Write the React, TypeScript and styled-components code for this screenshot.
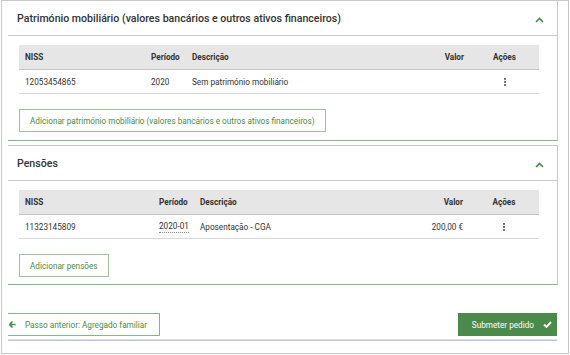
import React from "react";
import styled, { createGlobalStyle } from "styled-components";

const GlobalStyle = createGlobalStyle`
  html, body { margin: 0; padding: 0; background: #fff; }
  body { font-family: Roboto, "Liberation Sans", Arial, sans-serif; color: #333; }
  * { box-sizing: border-box; }
`;

const GREEN = "#4b8a4b";

const Frame = styled.div`
  width: 568px;
  height: 354px;
  margin-left: 1px;
  border: 1px solid #c8c8c8;
  overflow: hidden;
`;

const Content = styled.div`
  padding: 0 10px 0 6px;
`;

const Panel = styled.section<{ $first?: boolean }>`
  border-right: 1px solid #c8c8c8;
  border-top: ${(p) => (p.$first ? "none" : "1px solid #c8c8c8")};
  border-bottom: 1px solid #86b686;
  margin-bottom: 4px;
`;

const PanelHeader = styled.div`
  height: 35px;
  border-bottom: 1px solid #c8c8c8;
  display: flex;
  align-items: center;
  justify-content: space-between;
  padding: 0 13px 0 9px;
`;

const Title = styled.h2`
  margin: 0;
  font-size: 10.6px;
  font-weight: 500;
  color: #333;
`;

const ChevronWrap = styled.span`
  display: flex;
  margin-top: 4px;
`;

const PanelBody = styled.div<{ $top: number; $bottom: number }>`
  padding: ${(p) => p.$top}px 18px ${(p) => p.$bottom}px 11px;
`;

const Table = styled.div<{ $cols: string }>`
  display: grid;
  grid-template-columns: ${(p) => p.$cols};
  font-size: 8.2px;
  color: #333;
  white-space: nowrap;
`;

const HeadCell = styled.div<{ $align?: string }>`
  background: #e6e6e6;
  height: 25px;
  border-bottom: 1px solid #c4c4c4;
  display: flex;
  align-items: center;
  justify-content: ${(p) => p.$align || "flex-start"};
  padding: 0 6px;
  font-weight: 700;
`;

const Cell = styled.div<{ $align?: string }>`
  height: 24px;
  border-bottom: 1px solid #d8d8d8;
  display: flex;
  align-items: center;
  justify-content: ${(p) => p.$align || "flex-start"};
  padding: 0 6px;
`;

const Dotted = styled.span`
  border-bottom: 1px dotted #888;
  line-height: 11px;
`;

const OutlineButton = styled.button`
  margin-top: 15px;
  height: 23px;
  padding: 0 10px;
  background: #fff;
  border: 1px solid #9cc39c;
  color: ${GREEN};
  font-family: Roboto, "Liberation Sans", Arial, sans-serif;
  font-size: 8.2px;
  cursor: pointer;
`;

const Footer = styled.div`
  margin-top: 28px;
  display: flex;
  justify-content: space-between;
  align-items: center;
  padding-right: 1px;
`;

const PrevButton = styled.button`
  height: 23px;
  width: 152px;
  display: flex;
  align-items: center;
  gap: 9px;
  padding: 0 0 0 1px;
  background: #fff;
  border: 1px solid #86b686;
  border-left: none;
  color: ${GREEN};
  font-family: Roboto, "Liberation Sans", Arial, sans-serif;
  font-size: 8.2px;
`;

const SubmitButton = styled.button`
  height: 23px;
  width: 99px;
  display: flex;
  align-items: center;
  justify-content: flex-end;
  gap: 9px;
  padding: 0 5px 0 0;
  background: ${GREEN};
  border: none;
  color: #fff;
  font-family: Roboto, "Liberation Sans", Arial, sans-serif;
  font-size: 8.2px;
`;

const BottomLine = styled.div`
  margin-top: 3px;
  margin-right: 1px;
  height: 2px;
  border-top: 1px solid #dedede;
  border-bottom: 1px solid #b9c6e2;
`;

const Chevron = () => (
  <ChevronWrap>
    <svg width="9" height="6" viewBox="0 0 9 6">
      <polyline points="1,5 4.5,1.5 8,5" fill="none" stroke={GREEN} strokeWidth="1.6" />
    </svg>
  </ChevronWrap>
);

const Kebab = () => (
  <svg width="2" height="8" viewBox="0 0 2 8">
    <rect x="0" y="0" width="2" height="1.8" fill="#666" />
    <rect x="0" y="3.1" width="2" height="1.8" fill="#666" />
    <rect x="0" y="6.2" width="2" height="1.8" fill="#666" />
  </svg>
);

const ArrowLeft = () => (
  <svg width="7" height="7" viewBox="0 0 8 8">
    <path d="M4 0.5 L0.8 4 L4 7.5 M1 4 H7.5" fill="none" stroke={GREEN} strokeWidth="1.8" />
  </svg>
);

const Check = () => (
  <svg width="9" height="7" viewBox="0 0 9 7">
    <polyline points="1,3.5 3.5,6 8,1" fill="none" stroke="#fff" strokeWidth="1.9" />
  </svg>
);

type Row = { niss: string; periodo: string; descricao: string; valor: string; dotted?: boolean };

const DataTable = ({ cols, row }: { cols: string; row: Row }) => (
  <Table $cols={cols}>
    <HeadCell>NISS</HeadCell>
    <HeadCell>Período</HeadCell>
    <HeadCell>Descrição</HeadCell>
    <HeadCell $align="flex-end">Valor</HeadCell>
    <HeadCell $align="center">Ações</HeadCell>
    <Cell>{row.niss}</Cell>
    <Cell>{row.dotted ? <Dotted>{row.periodo}</Dotted> : row.periodo}</Cell>
    <Cell>{row.descricao}</Cell>
    <Cell $align="flex-end">{row.valor}</Cell>
    <Cell $align="center">
      <Kebab />
    </Cell>
  </Table>
);

export default function App() {
  return (
    <>
      <GlobalStyle />
      <Frame>
        <Content>
          <Panel $first>
            <PanelHeader>
              <Title>Património mobiliário (valores bancários e outros ativos financeiros)</Title>
              <Chevron />
            </PanelHeader>
            <PanelBody $top={9} $bottom={8}>
              <DataTable
                cols="126px 41px 1fr 60px 69px"
                row={{ niss: "12053454865", periodo: "2020", descricao: "Sem património mobiliário", valor: "" }}
              />
              <OutlineButton>
                Adicionar património mobiliário (valores bancários e outros ativos financeiros)
              </OutlineButton>
            </PanelBody>
          </Panel>
          <Panel>
            <PanelHeader>
              <Title>Pensões</Title>
              <Chevron />
            </PanelHeader>
            <PanelBody $top={9} $bottom={7}>
              <DataTable
                cols="134px 41px 1fr 60px 70px"
                row={{
                  niss: "11323145809",
                  periodo: "2020-01",
                  descricao: "Aposentação - CGA",
                  valor: "200,00 €",
                  dotted: true,
                }}
              />
              <OutlineButton>Adicionar pensões</OutlineButton>
            </PanelBody>
          </Panel>
          <Footer>
            <PrevButton>
              <ArrowLeft />
              Passo anterior: Agregado familiar
            </PrevButton>
            <SubmitButton>
              Submeter pedido
              <Check />
            </SubmitButton>
          </Footer>
          <BottomLine />
        </Content>
      </Frame>
    </>
  );
}
